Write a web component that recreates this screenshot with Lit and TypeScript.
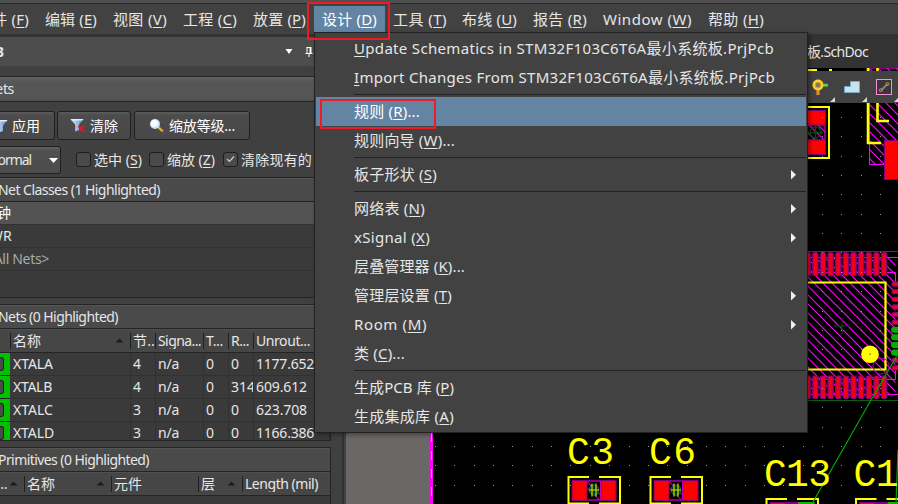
import { LitElement, html, css, svg, nothing } from "lit";
import { customElement, property, state } from "lit/decorators.js";
import { classMap } from "lit/directives/class-map.js";
import { styleMap } from "lit/directives/style-map.js";

/** One line of text whose tracking is adjusted to fill a given width. */
@customElement("fit-text")
class FitText extends LitElement {
  static styles = css`
    :host { display: inline-block; white-space: pre; flex: none; }
    .run { display: inline-block; white-space: pre; }
    .u { text-decoration: underline; text-decoration-thickness: 1px; text-underline-offset: 2px; }
  `;
  @property() text = "";
  @property({ type: Number }) width = 0;
  @state() spacing = 0;

  firstUpdated() {
    const run = this.renderRoot.querySelector(".run") as HTMLElement;
    if (this.width && this.text.length) {
      this.spacing = (this.width - run.getBoundingClientRect().width) / this.text.replace(/_/g, "").length;
    }
  }

  render() {
    const m = this.text.match(/^(.*)_(.)(.*)$/);
    const body = m ? html`${m[1]}<span class="u">${m[2]}</span>${m[3]}` : this.text;
    return html`<span class="run" style=${styleMap({ letterSpacing: `${this.spacing}px` })}>${body}</span>`;
  }
}

const fit = (text: string, width = 0) => html`<fit-text .text=${text} .width=${width}></fit-text>`;

/* ---------- menu bar ---------- */
const MENUS: [string, number, number][] = [
  ["文件 (_F)", 52, 68], ["编辑 (_E)", 52, 68], ["视图 (_V)", 54, 70], ["工程 (_C)", 54, 70],
  ["放置 (_P)", 53, 69], ["设计 (_D)", 55, 71], ["工具 (_T)", 54, 69], ["布线 (_U)", 55, 71],
  ["报告 (_R)", 54, 70], ["Window (_W)", 89, 105], ["帮助 (_H)", 56, 72],
];

@customElement("menu-bar")
class MenuBar extends LitElement {
  static styles = css`
    :host { display: flex; background: #424242; border-top: 1px solid #2a2a2a; border-bottom: 3px solid #333; box-sizing: border-box; height: 34px; }
    .bar { display: flex; margin-left: -31px; padding-top: 2px; }
    .item { display: flex; align-items: center; box-sizing: border-box; padding-left: 8px; height: 26px; flex: none; line-height: 26px; }
    .open { background: #6384a3; color: #fff; }
  `;
  render() {
    return html`<div class="bar">${MENUS.map(([t, w, box], i) => html`
      <div class=${classMap({ item: true, open: i === 5 })} style=${styleMap({ width: `${box}px` })}>${fit(t, w)}</div>`)}</div>`;
  }
}

/* ---------- design menu ---------- */
type Entry = { t: string; w: number; sub?: boolean; hot?: boolean } | null;
const ENTRIES: Entry[] = [
  { t: "_Update Schematics in STM32F103C6T6A最小系统板.PrjPcb", w: 420 },
  { t: "_Import Changes From STM32F103C6T6A最小系统板.PrjPcb", w: 421 },
  null,
  { t: "规则 (_R)...", w: 66, hot: true },
  { t: "规则向导 (_W)...", w: 101 },
  null,
  { t: "板子形状 (_S)", w: 83, sub: true },
  null,
  { t: "网络表 (_N)", w: 71, sub: true },
  { t: "xSignal (_X)", w: 76, sub: true },
  { t: "层叠管理器 (_K)...", w: 111 },
  { t: "管理层设置 (_T)", w: 98, sub: true },
  { t: "Room (_M)", w: 73, sub: true },
  { t: "类 (_C)...", w: 51 },
  null,
  { t: "生成PCB 库 (_P)", w: 100 },
  { t: "生成集成库 (_A)", w: 100 },
];

@customElement("drop-menu")
class DropMenu extends LitElement {
  static styles = css`
    :host { display: block; box-sizing: border-box; background: #424242; border: 1px solid #222; padding: 1px 1px; box-shadow: 2px 2px 4px rgba(0,0,0,.35); }
    .row { display: flex; align-items: center; justify-content: space-between; height: 29px; line-height: 29px; padding: 0 10px 0 38px; }
    .hot { background: #6384a3; color: #fff; }
    .sep { height: 5px; display: flex; align-items: center; padding-left: 38px; }
    .line { height: 1px; flex: 1; background: #222; }
    .arrow { width: 5px; height: 10px; }
  `;
  render() {
    return ENTRIES.map((e) => e === null
      ? html`<div class="sep"><div class="line"></div></div>`
      : html`<div class=${classMap({ row: true, hot: !!e.hot })}>${fit(e.t, e.w)}
          ${e.sub ? html`<svg class="arrow" viewBox="0 0 5 10"><path d="M0 0L5 4.7L0 9.4Z" fill="#f0f0f0"/></svg>` : nothing}</div>`);
  }
}

/* ---------- left panel ---------- */
const funnel = svg`<path d="M0.5 1H13.5L9 6.8V12L5.2 13.5V6.8Z" fill="url(#fg)"/><path d="M0.5 1H13.5L12.4 2.6H1.6Z" fill="#e3edfa"/>`;
const funnelDefs = svg`<defs><linearGradient id="fg"><stop offset="0" stop-color="#dce9fa"/><stop offset=".5" stop-color="#9dbde8"/><stop offset="1" stop-color="#5580bd"/></linearGradient></defs>`;

const NETS: [string, number, string, string, string, number][] = [
  ["XTALA", 40, "4", "0", "1177.652", 58],
  ["XTALB", 39, "4", "314", "609.612", 51],
  ["XTALC", 40, "3", "0", "623.708", 51],
  ["XTALD", 41, "3", "0", "1166.386", 58],
];

@customElement("side-panel")
class SidePanel extends LitElement {
  static styles = css`
    :host { display: flex; flex-direction: column; background: #404040; font-size: 14px; overflow: hidden; box-sizing: border-box; }
    .title { display: flex; align-items: center; height: 29px; background: #4d4d4d; flex: none; font-weight: 700; }
    .title .name { width: 282px; margin-left: -23px; }
    .title svg { flex: none; }
    .title .tri { width: 8px; height: 6px; margin-left: 26px; }
    .title .pin { width: 8px; height: 10px; margin-left: 12px; }
    .mode { height: 24px; flex: none; margin-top: 10px; border: solid #242424; border-width: 1px 0; background: linear-gradient(#626262, #565656 20%, #555 90%, #4c4c4c); display: flex; align-items: center; }
    .mode fit-text { margin-left: -15px; }
    .btns { display: flex; gap: 3px; margin-top: 9px; height: 29px; flex: none; }
    .btn { box-sizing: border-box; border: 1px solid #202020; border-radius: 3px; background: linear-gradient(#5c5c5c, #4c4c4c 12%, #484848); display: flex; align-items: center; color: #fff; height: 29px; }
    .apply { width: 56px; margin-left: -1px; border-left: 0; }
    .apply fit-text { margin-left: -3px; }
    .clear { width: 74px; padding-left: 12px; gap: 5px; margin-left: -1px; }
    .zoom { width: 116px; padding-left: 14px; gap: 4px; }
    .opts { display: flex; align-items: center; height: 28px; margin-top: 6px; flex: none; }
    .combo { width: 61px; height: 28px; box-sizing: border-box; border: 1px solid #202020; border-left: 0; border-radius: 0 3px 3px 0; background: linear-gradient(#606060, #505050 14%, #4c4c4c); display: flex; align-items: center; }
    .combo fit-text { margin-left: -12px; width: 61px; }
    .box { width: 15px; height: 15px; box-sizing: border-box; border: 1px solid #1e1e1e; border-radius: 3px; background: #4a4a4a; margin: -2px 3px 0 0; flex: none; display: flex; }
    .o1 { margin-left: 15px; } .o2 { margin-left: 7px; } .o3 { margin-left: 8px; }
    .cap { height: 23px; flex: none; background: #4a4a4a; border: solid #242424; border-width: 1px 0; box-shadow: inset 0 1px #555; display: flex; align-items: center; }
    .cap fit-text { margin-left: -2px; }
    .c1 { margin-top: 3px; }
    .list { background: #3a3a3a; height: 95px; flex: none; border-bottom: 1px solid #242424; }
    .li { height: 22px; border-bottom: 1px solid #323232; display: flex; align-items: center; }
    .l1 { margin-left: -17px; } .l2 { margin-left: -19px; } .l3 { margin-left: -14px; }
    .sel { background: #535353; color: #fff; }
    .dim { color: #aaa; }
    .frame { margin-right: 11px; flex: none; }
    .frame .cap { border-right: 1px solid #242424; }
    .hd, .tr { display: grid; align-items: center; }
    .nets { grid-template-columns: 11px 120px 25px 48px 25px 25px 1fr; }
    .prims { grid-template-columns: 25px 87px 87px 44px 1fr; }
    .hd { height: 23px; background: #464646; border-bottom: 1px solid #242424; box-shadow: inset 0 1px #505050; border-right: 1px solid #242424; }
    .hd > div { height: 16px; line-height: 16px; border-right: 1px solid #202020; display: flex; align-items: center; justify-content: space-between; padding: 0 6px 0 2px; overflow: hidden; white-space: nowrap; }
    .hd > div:last-child { border: 0; }
    .hd > .k { padding-right: 0; }
    .hd > .e fit-text { margin-left: -5px; }
    .rows { background: #3a3a3a; height: 87px; overflow: hidden; border-bottom: 1px solid #242424; border-right: 1px solid #242424; }
    .tr { height: 23px; }
    .tr > div { height: 22px; border-bottom: 1px solid #313131; border-right: 1px solid #313131; padding-left: 2px; display: flex; align-items: center; overflow: hidden; }
    .tr > .g { background: #00c000; padding: 0; border-right: 0; width: 10px; border-bottom-color: #222; }
    .sort { width: 9px; height: 5px; flex: none; }
    .gap { height: 6px; flex: none; }
    .body { background: #3a3a3a; height: 12px; margin-right: 11px; flex: none; border-right: 1px solid #242424; }
    .check { width: 4px; height: 14px; box-sizing: border-box; border: 1px solid #222; border-left: 0; border-radius: 0 3px 3px 0; background: #4a4a4a; margin-right: 6px; }
  `;
  sort = html`<svg class="sort" viewBox="0 0 9 5"><path d="M.5 4.5L4.5 .5L8.5 4.5Z" fill="#1c1c1c"/></svg>`;

  render() {
    return html`
      <div class="title"><div class="name">PCB</div>
        <svg class="tri" viewBox="0 0 8 6"><path d="M.5 0H7.5L4 5Z" fill="#fff"/></svg>
        <svg class="pin" viewBox="0 0 8 10"><path d="M1.5 .5H6M2 .5V6M.5 6.5H7.5M4 7V10" fill="none" stroke="#fff"/><path d="M4.5 0H6.5V6H4.5Z" fill="#fff"/></svg>
      </div>
      <div class="mode">${fit("Nets", 29)}</div>
      <div class="btns">
        <div class="btn apply"><svg width="16" height="16" viewBox="0 0 16 16">${funnelDefs}<g transform="translate(-5 1)">${funnel}</g></svg>${fit("应用", 28)}</div>
        <div class="btn clear"><svg width="15" height="15" viewBox="0 0 15 15">${funnelDefs}<g>${funnel}</g><path d="M8.5 8L14 13.5M14 8L8.5 13.5" stroke="#d3202a" stroke-width="2"/></svg>${fit("清除", 28)}</div>
        <div class="btn zoom"><svg width="16" height="16" viewBox="0 0 16 16"><path d="M9 9L14 13.5" stroke="#c98d2c" stroke-width="2.6"/><path d="M9 9L13 12.5" stroke="#f0cf74" stroke-width="1"/><circle cx="6" cy="6" r="5" fill="#cfdff5"/><circle cx="5.3" cy="5.3" r="3.6" fill="#f8fbff"/></svg>${fit("缩放等级...", 66)}</div>
      </div>
      <div class="opts">
        <div class="combo">${fit("Normal", 43)}<svg width="9" height="5" viewBox="0 0 9 5"><path d="M0 0H9L4.5 5Z" fill="#fff"/></svg></div>
        <div class="box o1"></div>${fit("选中 (_S)", 48)}
        <div class="box o2"></div>${fit("缩放 (_Z)", 48)}
        <div class="box o3"><svg width="13" height="13" viewBox="0 0 13 13"><path d="M3 6L5.5 8.5L10 3.5" fill="none" stroke="#ccc" stroke-width="1.2"/></svg></div>${fit("清除现有的", 71)}
      </div>
      <div class="cap c1">${fit("Net Classes (1 Highlighted)", 162)}</div>
      <div class="list">
        <div class="li sel"><div class="l1">${fit("时钟", 28)}</div></div>
        <div class="li"><div class="l2">${fit("PWR", 31)}</div></div>
        <div class="li dim"><div class="l3">${fit("<All Nets>", 63)}</div></div>
      </div>
      <div class="gap"></div>
      <div class="frame">
        <div class="cap">${fit("Nets (0 Highlighted)", 120)}</div>
        <div class="hd nets">
          <div></div><div>${fit("名称", 28)}${this.sort}</div><div class="k">${fit("节..", 22)}</div><div class="k">${fit("Signa...", 43)}</div>
          <div class="k">${fit("T...", 17)}</div><div class="k">${fit("R...", 18)}</div><div class="k">${fit("Unrout...", 54)}</div>
        </div>
        <div class="rows">${NETS.map(([n, nw, nodes, r, len, lw]) => html`
          <div class="tr nets"><div class="g"><div class="check"></div></div><div>${fit(n, nw)}</div><div>${fit(nodes, 8)}</div><div>${fit("n/a", 21)}</div>
            <div>${fit("0", 8)}</div><div>${fit(r, r.length > 1 ? 24 : 8)}</div><div>${fit(len, lw)}</div></div>`)}
        </div>
      </div>
      <div class="gap"></div>
      <div class="frame">
        <div class="cap">${fit("Primitives (0 Highlighted)", 151)}</div>
        <div class="hd prims">
          <div class="e">${fit("...", 10)}${this.sort}</div><div>${fit("名称", 28)}${this.sort}</div><div>${fit("元件", 28)}</div><div>${fit("层", 14)}${this.sort}</div><div class="k">${fit("Length (mil)", 73)}</div>
        </div>
      </div>
      <div class="body"></div>`;
  }
}

/* ---------- board ---------- */
const STEP = 19.35;

@customElement("pcb-view")
class PcbView extends LitElement {
  static styles = css`
    :host { display: block; overflow: hidden; }
    svg { display: block; }
    .des { font-family: "Liberation Mono", monospace; font-size: 38px; fill: #ff0; }
  `;
  dots() {
    const out = [];
    for (let i = 0; i < 25; i++) for (let j = -2; j < 21; j++) {
      out.push(svg`<rect x=${Math.round(435 + i * STEP)} y=${Math.round(117 + j * STEP)} width="1" height="1" fill="#999"/>`);
    }
    return out;
  }
  cap(x: number, y: number, green = false) {
    return svg`<g transform="translate(${x} ${y})">
      <path d="M22 1.5H1.5V28H22M32 1.5H53V28H32" fill="none" stroke="#ff0" stroke-width="2"/>
      <rect x="19.5" y="5.5" width="14" height="19" fill="none" stroke="#f0f"/><path d="M20 12L32 24M20 6L34 20" stroke="#f0f"/>
      <rect x="5" y="5" width="15" height="20" fill="#f00" stroke="#800080"/>
      <rect x="34" y="5" width="15" height="20" fill=${green ? "#0b0" : "#f00"} stroke=${green ? "#0b0" : "#800080"}/>
      <circle cx="27" cy="14.5" r="5" fill="#031" stroke="#073"/>
      <path d="M25 8V21M29 8V21M22 14.5H32" stroke="#dd0" stroke-width="1.2"/></g>`;
  }
  render() {
    const cols = Array.from({ length: 11 }, (_, i) => 807.7 + i * 7.64);
    const rows = Array.from({ length: 12 }, (_, i) => 284 + i * 7.62);
    return html`<svg width="552" height="436" viewBox="346 68 552 436">
      <defs>
        <pattern id="hatch" width="9" height="9" patternUnits="userSpaceOnUse"><path d="M-1 -1L10 10M-1 8L1 10M8 -1L10 1" stroke="#f0f" stroke-width="1.2"/></pattern>
      </defs>
      <rect x="346" y="68" width="552" height="436" fill="#000"/>
      <rect x="346" y="68" width="84" height="436" fill="#6c6767"/>
      <rect x="430" y="68" width="3" height="436" fill="#f0f"/>
      <path d="M431.5 433V504" stroke="#f9c" stroke-dasharray="9 9"/>
      <path d="M808 70H817M829 70H832" stroke="#ff0" stroke-width="2"/>

      <rect x="800" y="125" width="25" height="15" fill="url(#hatch)" stroke="#f0f"/>
      <rect x="800" y="110.5" width="25.5" height="14.5" fill="#f00" stroke="#800080"/>
      <rect x="800" y="140" width="25.5" height="14.5" fill="#f00" stroke="#800080"/>
      <path d="M800 107H829V158H800" fill="none" stroke="#ff0" stroke-width="2"/>
      <circle cx="815.5" cy="132.5" r="5.5" fill="none" stroke="#064d06" stroke-width="1.3"/>
      <path d="M808 132.5H823M815.5 125V140" stroke="#064d06" stroke-width="1.3"/>

      <path d="M869.5 68H900V164.5H869.5Z" fill="url(#hatch)" stroke="#f0f"/>
      <rect x="884.5" y="140.5" width="20" height="39" fill="#f00" stroke="#800080"/>
      <path d="M868 68V143H881M877.5 68V121H889" fill="none" stroke="#ff0" stroke-width="2.6"/>

      <rect x="800" y="257.5" width="95.5" height="137" fill="url(#hatch)"/>
      <path d="M807 257.5H884M807 272.5H895.5V284M807 394.5H884M807 379.5H895.5V368M887 257.5H898M887 394.5H898" fill="none" stroke="#f0f"/>
      <path d="M807 251.5H898M807 400.5H898" stroke="#075f07"/>
      ${cols.map((x) => svg`<rect x=${x - 2.6} y="252.7" width="5.2" height="23" rx="1.5" fill="#f00018" stroke="#800080" stroke-width="1.2"/>
        <rect x=${x - 2.6} y="376" width="5.2" height="22.5" rx="1.5" fill="#f00018" stroke="#800080" stroke-width="1.2"/>`)}
      ${rows.map((y, i) => i > 5 && i < 10
        ? svg`<rect x="891" y=${y - 3} width="14" height="6" rx="3" fill="#00b000"/>`
        : svg`<rect x="892" y=${y - 2} width="14" height="4.2" rx="1.5" fill="#f00018" stroke="#800080"/>`)}
      <path d="M800 282.5H885.5V369.5H800" fill="none" stroke="#ff0" stroke-width="2.2"/>
      <path d="M834 326H850M842 318V334" stroke="#0a3a0a" stroke-width="1.3"/>
      <circle cx="881" cy="366" r="8" fill="none" stroke="#a000a0"/>
      ${this.dots()}
      <circle cx="870" cy="354.2" r="8.8" fill="#ff0"/><rect x="869.5" y="353.5" width="1.3" height="1.3" fill="#660"/>

      ${this.cap(567, 475.5)}${this.cap(649, 475.5)}${this.cap(765, 497.5, true)}${this.cap(854.5, 497.5, true)}
      <path d="M898 354L871 400L813 502M898 450L896 504" fill="none" stroke="#00a800" stroke-width="1.2"/>
      <text class="des" x="567" y="464" textLength="47">C3</text>
      <text class="des" x="649" y="464" textLength="47">C6</text>
      <text class="des" x="764" y="486" textLength="67">C13</text>
      <text class="des" x="853.5" y="486" textLength="45">C1</text>
    </svg>`;
  }
}

@customElement("tool-strip")
class ToolStrip extends LitElement {
  static styles = css`:host { display: block; background: #424242; } svg { display: block; }`;
  render() {
    return html`<svg width="91" height="32" viewBox="807 71 91 32">
      <path d="M818 89V95" stroke="#d9932c" stroke-width="3.2"/><path d="M822 85.3H828" stroke="#4aa83c" stroke-width="3.2"/><path d="M823 85H827.5" stroke="#9be08a"/>
      <circle cx="818" cy="85" r="4" fill="#777" stroke="#e0a818" stroke-width="3.4"/><circle cx="818" cy="85" r="4.2" fill="none" stroke="#ffe040" stroke-width="1.4"/>
      <path d="M844.5 92.5V86.5H850.5V81.5H859.5V92.5Z" fill="#c6e4ee" stroke="#78a8c4"/>
      <rect x="876.5" y="79.5" width="15" height="15" fill="#3a3638" stroke="#f090d8"/>
      <path d="M881 90.5L887.5 84" stroke="#7388a0" stroke-width="1.8"/><circle cx="880.8" cy="90.2" r="1.5" fill="none" stroke="#c48a30"/><circle cx="887.5" cy="84" r="1.5" fill="none" stroke="#c48a30"/>
      <path d="M835 97V102H830ZM867 97V102H862ZM899 97V102H894Z" fill="#d8d8d8"/>
    </svg>`;
  }
}

@customElement("app-root")
class AppRoot extends LitElement {
  static styles = css`
    :host { position: relative; display: flex; flex-direction: column; width: 898px; height: 504px; overflow: hidden; background: #424242; color: #e6e6e6; font: 15px/20px "Noto Sans", "Noto Sans CJK SC", sans-serif; }
    .top { height: 3px; background: #505050; flex: none; }
    menu-bar { flex: none; }
    .work { display: flex; flex: 1; min-height: 0; }
    side-panel { width: 344px; border-right: 2px solid #303030; flex: none; }
    .docs { display: flex; flex-direction: column; flex: 1; min-width: 0; margin-left: 2px; }
    .tabs { height: 31px; box-sizing: border-box; flex: none; background: #333; font-size: 14px; padding: 0 0 2px 461px; display: flex; align-items: center; }
    .drop { position: absolute; left: 314px; top: 32px; width: 494px; height: 401px; }
    .tools { position: absolute; left: 807px; top: 71px; }
    .mark { position: absolute; box-sizing: border-box; border: 2px solid #ed1c24; }
    .m1 { left: 307px; top: 2px; width: 83px; height: 38px; }
    .m2 { left: 320px; top: 99px; width: 116px; height: 30px; }
  `;
  render() {
    return html`
      <div class="top"></div>
      <menu-bar></menu-bar>
      <div class="work">
        <side-panel></side-panel>
        <div class="docs">
          <div class="tabs">${fit("板.SchDoc", 61)}</div>
          <pcb-view></pcb-view>
        </div>
      </div>
      <tool-strip class="tools"></tool-strip>
      <drop-menu class="drop"></drop-menu>
      <div class="mark m1"></div>
      <div class="mark m2"></div>`;
  }
}
